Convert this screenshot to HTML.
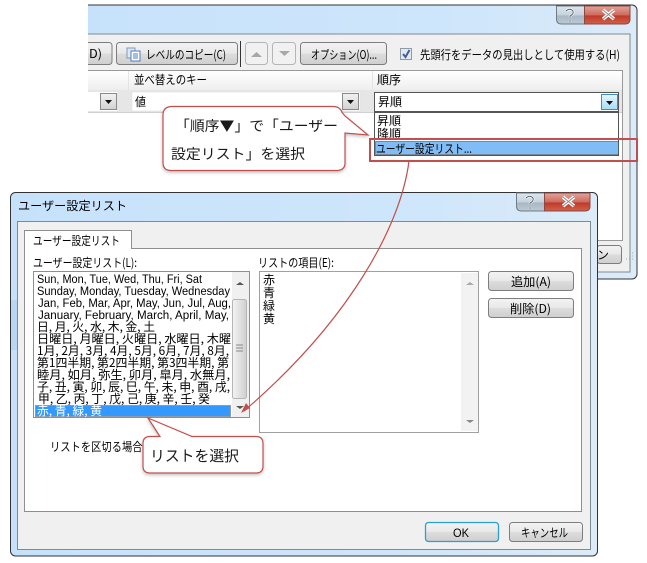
<!DOCTYPE html>
<html lang="ja"><head><meta charset="utf-8"><title>ユーザー設定リスト</title>
<style>
html,body{margin:0;padding:0;background:#fff;width:647px;height:563px;overflow:hidden}
svg{display:block}
text{font-family:"Liberation Sans","Noto Sans CJK JP",sans-serif;font-size:12px;fill:#000;white-space:pre}
.j{font-family:"Noto Sans CJK JP","Liberation Sans",sans-serif;font-weight:400}
.l{font-size:11.5px}
.c{font-family:"Noto Sans CJK JP",sans-serif;font-size:14px;fill:#1a1a1a}
</style></head><body>
<svg width="647" height="563" viewBox="0 0 647 563" xmlns="http://www.w3.org/2000/svg">
<defs>
<linearGradient id="btn" x1="0" y1="0" x2="0" y2="1"><stop offset="0" stop-color="#f3f3f3"/><stop offset=".48" stop-color="#e9e9e9"/><stop offset=".52" stop-color="#dcdcdc"/><stop offset="1" stop-color="#cfcfcf"/></linearGradient>
<linearGradient id="hdr" x1="0" y1="0" x2="0" y2="1"><stop offset="0" stop-color="#fff"/><stop offset="1" stop-color="#eeeeee"/></linearGradient>
<linearGradient id="ttl" x1="0" y1="0" x2="1" y2="0"><stop offset="0" stop-color="#c6e2fb"/><stop offset=".7" stop-color="#cfe6fb"/><stop offset="1" stop-color="#dcebf8"/></linearGradient>
<linearGradient id="cls" x1="0" y1="0" x2="0" y2="1"><stop offset="0" stop-color="#e2a59c"/><stop offset=".5" stop-color="#cf6a5c"/><stop offset=".55" stop-color="#bd3b2b"/><stop offset="1" stop-color="#d2604a"/></linearGradient>
<linearGradient id="hlp" x1="0" y1="0" x2="0" y2="1"><stop offset="0" stop-color="#dde6ee"/><stop offset=".5" stop-color="#c6d2dd"/><stop offset=".55" stop-color="#a9b8c6"/><stop offset="1" stop-color="#bcc9d4"/></linearGradient>
<linearGradient id="thumb" x1="0" y1="0" x2="1" y2="0"><stop offset="0" stop-color="#f4f4f4"/><stop offset="1" stop-color="#cfcfcf"/></linearGradient>
<linearGradient id="cmb" x1="0" y1="0" x2="0" y2="1"><stop offset="0" stop-color="#f2f2f2"/><stop offset="1" stop-color="#d2d2d2"/></linearGradient>
<linearGradient id="cmbh" x1="0" y1="0" x2="0" y2="1"><stop offset="0" stop-color="#e6f5fd"/><stop offset="1" stop-color="#a9dcf6"/></linearGradient>
<clipPath id="list1"><rect x="35" y="273" width="196" height="144"/></clipPath>
<clipPath id="drop"><rect x="375" y="113" width="244" height="26"/></clipPath>
<clipPath id="cut"><rect x="88" y="0" width="559" height="300"/></clipPath>
<filter id="sh" x="-10%" y="-10%" width="120%" height="125%"><feDropShadow dx="0" dy="1.5" stdDeviation="1.5" flood-color="#000" flood-opacity=".25"/></filter>
</defs>

<!-- Back dialog -->
<g clip-path="url(#cut)">
<rect x="70" y="5" width="567" height="274" rx="5" fill="url(#ttl)" stroke="#333" stroke-width="1"/>
<rect x="70" y="34" width="560" height="238" fill="#f0f0f0" stroke="#7f8a94"/>
<rect x="70" y="42.5" width="42" height="22" rx="3" fill="url(#btn)" stroke="#7d7d7d"/>
</g>
<!-- toolbar -->
<text x="89" y="58" textLength="13" lengthAdjust="spacingAndGlyphs" class="j">D)</text>
<rect x="116.500" y="42.500" width="121" height="22" rx="3" fill="url(#btn)" stroke="#7d7d7d"/>
<rect x="127" y="48" width="8" height="10" fill="#dfe8f2" stroke="#7f9ab8"/>
<rect x="131" y="51" width="9" height="10" fill="#fff" stroke="#4a7fbd"/>
<path d="M133 54h5M133 56h5M133 58h5" stroke="#4a7fbd" stroke-width="1"/>
<text x="146" y="59" textLength="80" lengthAdjust="spacingAndGlyphs" class="j">レベルのコピー(C)</text>
<rect x="240" y="41" width="1" height="26" fill="#333"/>
<rect x="245.500" y="42.500" width="22" height="22" rx="3" fill="#f1f1f1" stroke="#b5b5b5"/>
<path d="M251 57l5.500-5 5.500 5z" fill="#a8a8a8"/>
<rect x="272.500" y="42.500" width="23" height="22" rx="3" fill="#f1f1f1" stroke="#b5b5b5"/>
<path d="M279 51l5.500 5 5.500-5z" fill="#a8a8a8"/>
<rect x="300.500" y="42.500" width="86" height="22" rx="3" fill="url(#btn)" stroke="#7d7d7d"/>
<text x="311" y="59" textLength="66" lengthAdjust="spacingAndGlyphs" class="j">オプション(O)...</text>
<rect x="400.500" y="48.500" width="11" height="11" fill="#e4e9ef" stroke="#8e9aa5"/>
<path d="M403 54l2.500 3 4-7" fill="none" stroke="#3f5f96" stroke-width="2"/>
<text x="420" y="59" textLength="200" lengthAdjust="spacingAndGlyphs" class="j">先頭行をデータの見出しとして使用する(H)</text>

<!-- grid panel -->
<rect x="88" y="70.500" width="534" height="170" fill="#fff"/>
<path d="M88 70.500H622.500V240.500H88" fill="none" stroke="#9a9a9a"/>
<rect x="88" y="71" width="534" height="19" fill="url(#hdr)"/>
<rect x="88" y="90" width="534" height="23" fill="#e6e6e6"/>
<rect x="88" y="112" width="534" height="1" fill="#d0d0d0"/>
<rect x="128" y="71" width="1" height="19" fill="#e4e4e4"/>
<rect x="372" y="71" width="1" height="19" fill="#e4e4e4"/>
<text x="134" y="84" textLength="73" lengthAdjust="spacingAndGlyphs" class="j">並べ替えのキー</text>
<text x="377" y="84" textLength="24" lengthAdjust="spacingAndGlyphs" class="j">順序</text>
<rect x="88" y="92" width="29" height="19" fill="#fff"/>
<rect x="100.500" y="93.500" width="16" height="16" fill="url(#cmb)" stroke="#8a8a8a"/>
<path d="M105 100h7l-3.500 4z" fill="#111"/>
<rect x="132" y="92" width="228" height="19" fill="#fff" stroke="#dcdcdc" stroke-width=".5"/>
<text x="135" y="106" textLength="11" lengthAdjust="spacingAndGlyphs" class="j">値</text>
<rect x="342.500" y="93.500" width="16" height="16" fill="url(#cmb)" stroke="#8a8a8a"/>
<path d="M347 100h7l-3.500 4z" fill="#111"/>
<rect x="374.500" y="92.500" width="244" height="19" fill="#fff" stroke="#555"/>
<text x="378" y="106" textLength="24" lengthAdjust="spacingAndGlyphs" class="j">昇順</text>
<rect x="601.500" y="94.500" width="16" height="15" fill="url(#cmbh)" stroke="#3c8ec4"/>
<path d="M606 101h7l-3.500 4z" fill="#111"/>
<rect x="374.500" y="112.500" width="244" height="43" fill="#fff" stroke="#555"/>
<g clip-path="url(#drop)">
<text x="377" y="125" textLength="24" lengthAdjust="spacingAndGlyphs" class="j">昇順</text>
<text x="377" y="138" textLength="24" lengthAdjust="spacingAndGlyphs" class="j">降順</text>
</g>
<rect x="375.500" y="141.500" width="243" height="13" fill="#80bcf6" stroke="#333" stroke-dasharray="1 1"/>
<text x="376" y="153" textLength="96" lengthAdjust="spacingAndGlyphs" class="j">ユーザー設定リスト...</text>
<rect x="370" y="139" width="267" height="22" fill="none" stroke="#c0504d" stroke-width="2"/>

<!-- back dialog bottom button -->
<rect x="597" y="245.500" width="24.500" height="18" rx="3" fill="url(#btn)" stroke="#7d7d7d"/>
<text x="597" y="259" class="j" font-size="11">ン</text>
<path d="M626 259h1M629 259h1M632 259h1M629 256h1M632 256h1M632 253h1" stroke="#aaa"/>

<!-- Front dialog -->
<rect x="10.500" y="192.500" width="587" height="363.500" rx="5" fill="url(#ttl)" stroke="#333"/>
<rect x="17.500" y="221.500" width="573" height="328" fill="#f0f0f0" stroke="#7f8a94"/>
<rect x="11" y="300" width="6" height="50" fill="#b4d3ee" opacity=".7"/>
<text x="18" y="210" textLength="109" lengthAdjust="spacingAndGlyphs" class="j">ユーザー設定リスト</text>
<!-- tab panel -->
<rect x="24.500" y="248.500" width="557" height="263" fill="#fff" stroke="#8e8e8e"/>
<path d="M24.500 249V230.500H131.500V248" fill="#fff" stroke="#8e8e8e"/>
<rect x="25" y="247" width="106" height="3" fill="#fff"/>
<text x="33" y="245" textLength="87" lengthAdjust="spacingAndGlyphs" class="j">ユーザー設定リスト</text>
<text x="33" y="267" textLength="104" lengthAdjust="spacingAndGlyphs" class="j">ユーザー設定リスト(L):</text>
<text x="258" y="267" textLength="76" lengthAdjust="spacingAndGlyphs" class="j">リストの項目(E):</text>

<!-- list 1 -->
<rect x="33.500" y="271.500" width="216" height="146" fill="#fff" stroke="#8f8f8f"/>
<rect x="232" y="272" width="17" height="145" fill="#f0f0f0"/>
<rect x="232.500" y="299.500" width="14" height="99" rx="2" fill="url(#thumb)" stroke="#b5b5b5"/>
<path d="M236 285l4-3 4 3z" fill="#555"/>
<path d="M236 406l4 3 4-3z" fill="#555"/>
<path d="M236 345h7M236 348h7M236 351h7" stroke="#888"/>
<rect x="35" y="405" width="196" height="12" fill="#3399ff"/>
<rect x="35.500" y="405.500" width="195" height="11" fill="none" stroke="#e0a060" stroke-dasharray="1 1"/>
<g clip-path="url(#list1)">
<text class="l" x="37" y="283" textLength="165" lengthAdjust="spacingAndGlyphs">Sun, Mon, Tue, Wed, Thu, Fri, Sat</text>
<text class="l" x="37" y="295" textLength="193" lengthAdjust="spacingAndGlyphs">Sunday, Monday, Tuesday, Wednesday</text>
<text class="l" x="38" y="307" textLength="193" lengthAdjust="spacingAndGlyphs">Jan, Feb, Mar, Apr, May, Jun, Jul, Aug,</text>
<text class="l" x="38" y="319" textLength="191" lengthAdjust="spacingAndGlyphs">January, February, March, April, May,</text>
<text class="j" x="37" y="331" textLength="118" lengthAdjust="spacingAndGlyphs">日, 月, 火, 水, 木, 金, 土</text>
<text class="j" x="37" y="343" textLength="194" lengthAdjust="spacingAndGlyphs">日曜日, 月曜日, 火曜日, 水曜日, 木曜</text>
<text class="j" x="37" y="355" textLength="192" lengthAdjust="spacingAndGlyphs">1月, 2月, 3月, 4月, 5月, 6月, 7月, 8月,</text>
<text class="j" x="37" y="367" textLength="192" lengthAdjust="spacingAndGlyphs">第1四半期, 第2四半期, 第3四半期, 第</text>
<text class="j" x="37" y="379" textLength="193" lengthAdjust="spacingAndGlyphs">睦月, 如月, 弥生, 卯月, 皐月, 水無月,</text>
<text class="j" x="37" y="391" textLength="193" lengthAdjust="spacingAndGlyphs">子, 丑, 寅, 卯, 辰, 巳, 午, 未, 申, 酉, 戌,</text>
<text class="j" x="38" y="403" textLength="172" lengthAdjust="spacingAndGlyphs">甲, 乙, 丙, 丁, 戊, 己, 庚, 辛, 壬, 癸</text>
<text class="j" x="37" y="415" textLength="65" lengthAdjust="spacingAndGlyphs" style="fill:#fff">赤, 青, 緑, 黄</text>
</g>

<!-- list 2 -->
<rect x="259.500" y="271.500" width="219" height="161" fill="#fff" stroke="#a0a0a0"/>
<rect x="461" y="273" width="17" height="158" fill="#f2f2f2"/>
<path d="M466 285l4-3 4 3z" fill="#aaa"/>
<path d="M466 420l4 3 4-3z" fill="#888"/>
<text class="j" x="263" y="284">赤</text>
<text class="j" x="263" y="297">青</text>
<text class="j" x="263" y="310">緑</text>
<text class="j" x="263" y="323">黄</text>

<!-- buttons -->
<rect x="488.500" y="271.500" width="85" height="19" rx="3" fill="url(#btn)" stroke="#7d7d7d"/>
<text class="j" x="511" y="286" textLength="40" lengthAdjust="spacingAndGlyphs">追加(A)</text>
<rect x="488.500" y="298.500" width="85" height="19" rx="3" fill="url(#btn)" stroke="#7d7d7d"/>
<text class="j" x="510" y="313" textLength="41" lengthAdjust="spacingAndGlyphs">削除(D)</text>
<rect x="425.500" y="522.500" width="73" height="19" rx="3" fill="url(#btn)" stroke="#2a9fd8" stroke-width="1.300"/>
<text x="453" y="537" textLength="16" lengthAdjust="spacingAndGlyphs">OK</text>
<rect x="509.500" y="522.500" width="73" height="19" rx="3" fill="url(#btn)" stroke="#7d7d7d"/>
<text class="j" x="521" y="537" textLength="47" lengthAdjust="spacingAndGlyphs">キャンセル</text>
<text class="j" x="50" y="451" textLength="96" lengthAdjust="spacingAndGlyphs">リストを区切る場合(</text>

<!-- caption buttons, back -->
<path d="M556.500 6v13q0 5 5 5h23V6z" fill="url(#hlp)" stroke="#6f7b85"/>
<path d="M584.500 6v18H625q5 0 5-5V6z" fill="url(#cls)" stroke="#8a4a42"/>
<path d="M566 11q4-3.500 7 0 1 3-3 5v2M570 20v2" fill="none" stroke="#fff" stroke-width="2.300"/>
<path d="M566 11q4-3.500 7 0 1 3-3 5v2M570 20v2" fill="none" stroke="#59656f" stroke-width="1"/>
<path d="M603 10l11 9M614 10l-11 9" stroke="#fff" stroke-width="3.500"/>
<path d="M603 10l11 9M614 10l-11 9" stroke="#8f8f8f" stroke-width="1"/>
<!-- caption buttons, front -->
<path d="M516.500 193v13q0 5 5 5h23v-18z" fill="url(#hlp)" stroke="#6f7b85"/>
<path d="M544.500 193v18H585q5 0 5-5v-13z" fill="url(#cls)" stroke="#8a4a42"/>
<path d="M526 198q4-3.500 7 0 1 3-3 5v2M530 207v2" fill="none" stroke="#fff" stroke-width="2.300"/>
<path d="M526 198q4-3.500 7 0 1 3-3 5v2M530 207v2" fill="none" stroke="#59656f" stroke-width="1"/>
<path d="M563 197l11 9M574 197l-11 9" stroke="#fff" stroke-width="3.500"/>
<path d="M563 197l11 9M574 197l-11 9" stroke="#8f8f8f" stroke-width="1"/>

<!-- connector -->
<path d="M409 161C401 225 350 320 244 411" fill="none" stroke="#c0504d" stroke-width="1.200"/>
<path d="M241 413l5-10 4 5z" fill="#c0504d"/>

<!-- callouts -->
<path d="M171.500 106.500H333q7 0 9 6L345 116 368 135 345 133V163q0 7-8 7.500H171q-8 0-8-8V115q0-8 8.500-8.500z" fill="#fff" stroke="#c0504d" stroke-width="1.200" filter="url(#sh)"/>
<text class="c" x="175" y="131" textLength="163" lengthAdjust="spacingAndGlyphs">「順序▼」で「ユーザー</text>
<text class="c" x="171" y="159" textLength="134" lengthAdjust="spacingAndGlyphs">設定リスト」を選択</text>
<path d="M150 436.500H160L148 418 192 436.500H256q7 0 7 7V466q0 7-7 7H150q-7 0-7-7V443.500q0-7 7-7z" fill="#fff" stroke="#c0504d" stroke-width="1.200" filter="url(#sh)"/>
<text class="c" x="150" y="461" textLength="89" lengthAdjust="spacingAndGlyphs" style="font-size:15px">リストを選択</text>
</svg>
</body></html>
